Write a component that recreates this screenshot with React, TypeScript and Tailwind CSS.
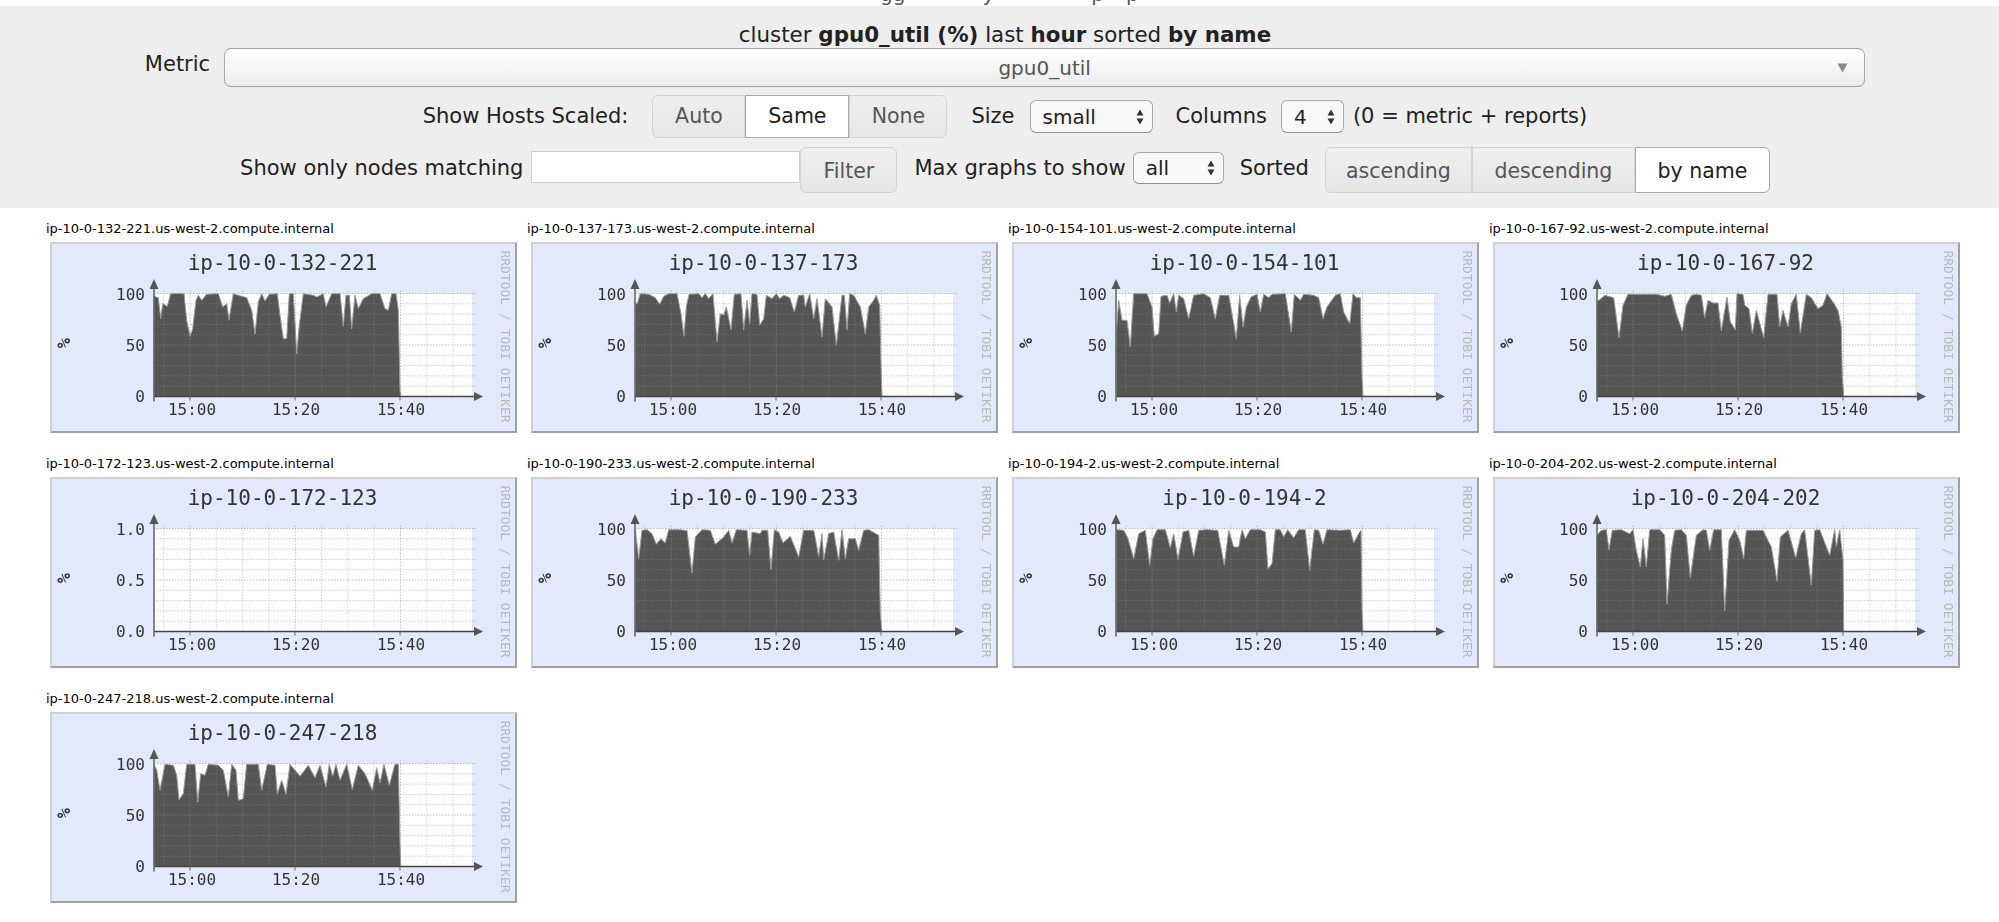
import React from "react";

type Row = 0 | 1 | 2;

const P = (s: string) => s.split(";").map((p) => p.trim().split(",").map(Number));

const charts: { host: string; zx: number; row: Row; data?: string; y?: string[] }[] = [
  { host: "ip-10-0-132-221", zx: 60, row: 0, data: "372,258;385,262;392,325;398,280;412,288;422,250;462,250;470,330;480,378;488,355;498,270;505,255;515,270;530,252;565,250;578,290;590,280;597,330;610,250;625,255;650,262;665,300;675,372;685,275;695,250;705,272;718,252;742,250;750,315;760,385;770,385;778,250;790,250;800,430;808,345;820,250;850,255;860,260;880,250;888,290;905,250;930,250;940,348;948,255;958,255;965,355;975,255;985,295;1000,265;1025,250;1050,250;1065,295;1075,300;1085,250;1098,250;1105,300;1110,540;1112,558" },
  { host: "ip-10-0-137-173", zx: 32, row: 0, data: "345,275;350,282;360,250;385,252;405,262;418,282;430,258;445,250;470,250;482,310;491,378;498,290;506,252;535,250;545,262;555,250;565,265;578,250;590,395;600,310;610,315;618,290;632,358;642,252;662,250;670,358;680,270;688,340;695,250;710,252;718,345;730,325;738,255;755,265;768,250;778,265;790,255;808,262;822,305;835,255;850,255;855,290;868,250;880,325;890,265;905,380;915,265;935,290;948,405;965,255;972,255;980,358;988,250;1000,255;1020,290;1035,370;1045,290;1060,270;1068,255;1078,285;1083,500;1085,558" },
  { host: "ip-10-0-154-101", zx: 5, row: 0, data: "318,370;325,270;335,330;350,330;360,410;370,250;410,250;425,290;432,378;445,370;452,258;470,255;478,278;490,250;498,305;505,255;520,265;535,325;550,255;580,250;600,262;615,325;628,255;655,255;665,310;678,385;688,255;698,350;708,290;722,260;740,252;750,305;760,252;775,262;785,252;825,250;843,365;852,252;870,270;880,252;910,255;925,262;938,325;950,290;975,255;990,250;1000,305;1018,340;1028,250;1038,262;1050,262;1055,500;1058,558" },
  { host: "ip-10-0-167-92", zx: 10, row: 0, data: "322,272;330,268;345,255;372,262;388,382;400,285;415,252;500,252;525,258;545,252;560,310;578,362;590,285;605,255;620,252;635,255;645,322;655,270;670,278;685,278;695,362;712,260;722,335;737,358;742,250;760,252;765,285;778,295;788,370;800,300;822,382;835,252;862,252;870,350;880,300;895,350;905,280;920,252;932,368;950,252;965,262;985,295;1000,285;1012,250;1030,275;1045,300;1055,350;1058,500;1062,558" },
  { host: "ip-10-0-172-123", zx: 60, row: 1, y: ["1.0", "0.5", "0.0"] },
  { host: "ip-10-0-190-233", zx: 32, row: 1, data: "345,240;355,325;365,240;380,238;395,250;408,282;422,265;435,278;445,238;480,238;490,240;500,240;515,368;525,260;545,238;570,240;585,282;610,260;625,240;635,278;648,238;680,240;688,315;695,245;720,250;725,240;742,240;752,358;762,238;775,245;788,278;810,258;835,320;850,240;880,240;895,318;905,250;910,328;925,250;940,245;955,330;965,238;975,325;985,265;1005,265;1015,300;1030,240;1045,238;1075,255;1080,490;1085,545" },
  { host: "ip-10-0-194-2", zx: 5, row: 1, data: "318,238;340,240;352,262;370,325;385,250;405,240;418,345;428,265;440,238;465,238;480,292;490,250;503,328;518,245;535,240;550,318;565,240;590,238;622,240;642,345;655,240;670,290;685,290;695,238;705,265;720,238;750,238;765,245;773,355;785,340;795,238;810,238;820,260;832,238;850,262;865,238;885,238;898,360;912,238;925,240;938,282;950,238;990,240;1020,238;1030,278;1045,250;1052,240;1055,480;1058,545" },
  { host: "ip-10-0-204-202", zx: 10, row: 1, data: "322,255;335,240;350,238;358,298;368,240;395,238;420,250;430,238;440,300;452,350;460,265;470,350;480,238;510,238;525,255;532,462;545,300;555,240;575,238;590,255;602,382;620,255;640,238;650,240;660,300;672,238;695,238;705,482;718,270;735,238;750,270;762,325;770,240;820,240;845,290;862,392;872,260;895,240;918,322;935,250;945,238;965,405;975,240;990,238;1020,315;1035,238;1040,290;1050,238;1060,330;1062,545" },
  { host: "ip-10-0-247-218", zx: 60, row: 2, data: "372,222;380,240;390,300;405,222;430,225;440,255;447,328;460,310;470,222;495,222;503,335;512,250;525,255;535,222;565,225;580,240;595,320;605,222;618,240;625,330;640,325;650,222;685,222;695,300;712,222;735,225;742,310;755,270;768,312;780,222;795,240;810,258;835,225;855,262;870,225;888,290;898,222;908,258;918,222;930,270;950,222;967,298;985,225;1005,250;1027,300;1040,232;1050,278;1062,222;1078,285;1095,222;1105,222;1110,460;1112,528" },
];

const ROW_ZY = [95, 80, 65];
const L = 104, R = 422, T = 51.5, B = 154.5;
const MONO = "'DejaVu Sans Mono', 'Liberation Mono', monospace";

function Graph({ host, zx, row, data, y = ["100", "50", "0"] }: { host: string; zx: number; row: Row; data?: string; y?: string[] }) {
  const pts = data ? P(data).map(([a, b]) => [(a - zx) / 3, (b - ROW_ZY[row]) / 3]) : [];
  const x0 = pts.length ? pts[0][0] : L;
  const xE = pts.length ? pts[pts.length - 1][0] : L;
  const area = pts.length
    ? `M${x0} ${B} ` + pts.map(([a, b]) => `L${a.toFixed(1)} ${b.toFixed(1)}`).join(" ") + ` L${xE} ${B} Z`
    : "";
  const hLines = Array.from({ length: 10 }, (_, i) => T + ((B - T) * i) / 10);
  const vLines = Array.from({ length: 12 }, (_, i) => 113.7 + 26.3 * i);
  return (
    <svg width={467} height={191} viewBox="0 0 467 191" className="ml-[4px] block blur-[0.6px]">
      <rect x="0" y="0" width="467" height="191" fill="#a0a0a0" />
      <path d="M0 0H467L465 2H2V189L0 191Z" fill="#d0d0d0" />
      <rect x="2" y="2" width="463" height="187" fill="#e2e9fb" />
      <rect x={L} y={T} width={R - L} height={B - T} fill="#ffffff" />
      {area && <path d={area} fill="#555555" stroke="#9a9a9a" strokeWidth="1" />}
      {hLines.map((v, i) => (
        <line key={i} x1={L} x2={426} y1={v} y2={v} stroke="#8c8c8c" strokeOpacity={i === 5 || i === 0 ? 0.55 : 0.42} strokeDasharray="1.5 1.5" />
      ))}
      {vLines.map((v, i) => (
        <line key={i} x1={v} x2={v} y1={T - 3} y2={B} stroke="#8c8c8c" strokeOpacity={i % 4 === 1 ? 0.55 : 0.36} strokeDasharray="1.5 1.5" />
      ))}
      <line x1={L} x2={426} y1={B} y2={B} stroke="#444444" strokeWidth="1.5" />
      <line x1={L} x2={L} y1={45} y2={B + 5} stroke="#606060" strokeWidth="1.5" />
      <path d={`M${L - 4.5} 47L${L} 37L${L + 4.5} 47Z`} fill="#555555" />
      <path d={`M424 ${B - 4.5}L433 ${B}L424 ${B + 4.5}Z`} fill="#555555" />
      {[140, 245, 350].map((v) => (
        <line key={v} x1={v} x2={v} y1={B} y2={B + 4} stroke="#666666" />
      ))}
      <text x="232.5" y="28" textAnchor="middle" fontFamily={MONO} fontSize="21" fill="#333333">{host}</text>
      {[58, 109, 160].map((v, i) => (
        <text key={v} x="95" y={v} textAnchor="end" fontFamily={MONO} fontSize="16" fill="#333333">{y[i]}</text>
      ))}
      {[["15:00", 142], ["15:20", 246], ["15:40", 351]].map(([t, v]) => (
        <text key={t} x={v} y="173" textAnchor="middle" fontFamily={MONO} fontSize="16" fill="#333333">{t}</text>
      ))}
      <text transform="translate(20 101) rotate(-90)" textAnchor="middle" fontFamily={MONO} fontSize="17" fontWeight="700" fill="#333333">%</text>
      <text transform="translate(451 94.5) rotate(90)" textAnchor="middle" fontFamily={MONO} fontSize="13" fill="#b9b9b9">RRDTOOL / TOBI OETIKER</text>
    </svg>
  );
}

const seg = "h-full flex items-center justify-center border text-[20.5px] text-[#555555] border-[#d3d3d3] bg-linear-to-b from-[#efefef] to-[#e6e6e6]";
const active = "h-full flex items-center justify-center border text-[20.5px] bg-white text-[#212121] border-[#aaaaaa]";

function Arrows() {
  return (
    <svg width="8" height="16" viewBox="0 0 8 16" className="absolute right-[9px] top-1/2 -translate-y-1/2 pointer-events-none">
      <path d="M4 0.5L7.5 6.5H0.5Z M4 15.5L0.5 9.5H7.5Z" fill="#333333" />
    </svg>
  );
}

function Sel({ w, value, top = "" }: { w: string; value: string; top?: string }) {
  return (
    <div className={`relative ${w} ${top}`}>
      <select
        defaultValue={value}
        className="appearance-none w-full h-full rounded-[6px] border border-[#a9a9a9] border-b-[#8f8f8f] bg-[#f8f8f8] pl-[12px] text-[20px] text-[#212121] outline-none"
      >
        <option value={value}>{value}</option>
      </select>
      <Arrows />
    </div>
  );
}

export default function App() {
  return (
    <div className="min-h-[922px] bg-white text-[#212121] font-['DejaVu_Sans','Liberation_Sans',sans-serif] text-[21px]">
      <div className="h-[6px] overflow-hidden">
        <div className="-mt-[18px] ml-[880px] flex text-[#555555] text-[20px] leading-[24px]">
          <span>gg</span>
          <span className="ml-[77px]">y</span>
          <span className="ml-[97px]">p</span>
          <span className="ml-[22px]">p</span>
        </div>
      </div>

      <div className="bg-[#eeeeee] h-[202px] pt-[17px] pl-[11px]">
        <div className="h-[25px] leading-[24px] text-center text-[21.4px] whitespace-nowrap">
          cluster <b>gpu0_util (%)</b> last <b>hour</b> sorted <b>by name</b>
        </div>

        <div className="flex justify-center items-center h-[39px]">
          <span className="mr-[14px] -mt-[5px]">Metric</span>
          <div className="relative w-[1641px] h-[39px] rounded-[7px] border border-[#aaaaaa] border-t-[#9f9f9f] border-b-[#a0a0a0] bg-linear-to-b from-white to-[#ececec] flex items-center justify-center text-[20px] text-[#555555]">
            gpu0_util
            <svg width="11" height="10" viewBox="0 0 11 10" className="absolute right-[16px] top-[14px]">
              <path d="M0.5 0.5H10.5L5.5 9.5Z" fill="#8a8a8a" />
            </svg>
          </div>
        </div>

        <div className="flex justify-center items-center h-[43px] mt-[8px] whitespace-nowrap">
          <span className="mr-[24px]">Show Hosts Scaled:</span>
          <div className="flex h-full">
            <div className={`${seg} w-[93px] rounded-l-[6px]`}>Auto</div>
            <div className={`${active} w-[104px]`}>Same</div>
            <div className={`${seg} w-[98px] rounded-r-[6px]`}>None</div>
          </div>
          <span className="ml-[24px] mr-[15px]">Size</span>
          <Sel w="w-[123px] h-[33px]" value="small" />
          <span className="ml-[23px] mr-[14px]">Columns</span>
          <Sel w="w-[63px] h-[33px]" value="4" />
          <span className="ml-[9px]">(0 = metric + reports)</span>
        </div>

        <div className="flex justify-center items-start h-[46px] mt-[9px] whitespace-nowrap">
          <span className="mt-[8px] mr-[8px] leading-[26px]">Show only nodes matching</span>
          <input type="text" className="mt-[4px] w-[269px] h-[32px] bg-white border border-[#cfcfcf] outline-none" />
          <div className={`${seg} w-[97px] rounded-[6px] pt-[3px]`}>Filter</div>
          <span className="ml-[17px] mr-[7px] mt-[8px] leading-[26px]">Max graphs to show</span>
          <Sel w="w-[91px] h-[32px]" top="mt-[5px]" value="all" />
          <span className="ml-[16px] mr-[16px] mt-[8px] leading-[26px]">Sorted</span>
          <div className="flex h-full">
            <div className={`${seg} w-[147px] rounded-l-[6px] pt-[3px]`}>ascending</div>
            <div className={`${seg} w-[163px] pt-[3px]`}>descending</div>
            <div className={`${active} w-[135px] rounded-r-[6px] pt-[3px]`}>by name</div>
          </div>
        </div>
      </div>

      <div className="grid grid-cols-[repeat(4,481px)] gap-y-[22px] pl-[46px] pt-[12px]">
        {charts.map((c) => (
          <div key={c.host}>
            <div className="h-[18px] mb-[4px] leading-[18px] text-[13px] text-black whitespace-nowrap">
              {c.host}.us-west-2.compute.internal
            </div>
            <Graph {...c} />
          </div>
        ))}
      </div>
    </div>
  );
}
